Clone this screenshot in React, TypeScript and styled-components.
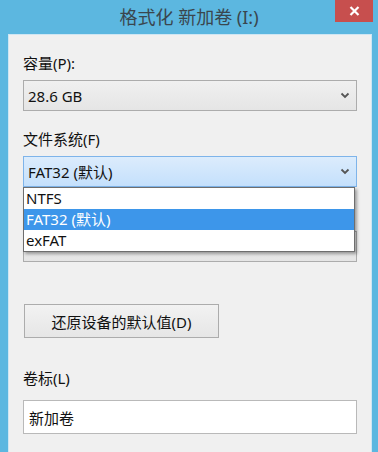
import styled, { createGlobalStyle } from "styled-components";

const GlobalStyle = createGlobalStyle`
  html, body {
    margin: 0;
    padding: 0;
  }
  body {
    font-family: "Noto Sans", "Noto Sans CJK SC", sans-serif;
  }
`;

const Window = styled.div`
  width: 378px;
  height: 452px;
  background: #5cb7e0;
  display: flex;
  flex-direction: column;
  overflow: hidden;
`;

const TitleBar = styled.div`
  height: 34px;
  flex: none;
  display: grid;
  grid-template-columns: 1fr auto 1fr;
  align-items: start;
`;

const Title = styled.div`
  grid-column: 2;
  font-size: 18px;
  line-height: 34px;
  color: #3a464e;
  white-space: nowrap;
`;

const CloseButton = styled.div`
  grid-column: 3;
  justify-self: end;
  margin-right: 5px;
  width: 38px;
  height: 22px;
  background: #c74f4e;
  display: flex;
  align-items: center;
  justify-content: center;
`;

const Panel = styled.div`
  flex: 1;
  margin: 0 6px 0 8px;
  background: #f0f0f0;
  border: 1px solid #cfe6f3;
  border-bottom: none;
  padding: 18px 14px 0 14px;
  display: flex;
  flex-direction: column;
`;

const Label = styled.div<{ $top?: number; $gap?: number }>`
  font-size: 15px;
  line-height: 20px;
  color: #111;
  margin-top: ${(p) => p.$top ?? 0}px;
  margin-bottom: ${(p) => p.$gap ?? 7}px;
`;

const Field = styled.div`
  position: relative;
`;

const Select = styled.div<{ $focused?: boolean; $top?: number }>`
  height: 31px;
  box-sizing: border-box;
  margin-top: ${(p) => p.$top ?? 0}px;
  border: 1px solid ${(p) => (p.$focused ? "#7eb4ea" : "#acacac")};
  background: ${(p) =>
    p.$focused
      ? "linear-gradient(#dcecfc, #c4e0fc)"
      : "linear-gradient(#f0f0f0, #e5e5e5)"};
  display: flex;
  align-items: center;
  justify-content: space-between;
  padding: 0 6px 0 4px;
  font-size: 15px;
  color: #111;
`;

const DropList = styled.div`
  position: absolute;
  top: 31px;
  left: 0;
  right: 2px;
  z-index: 2;
  background: #fff;
  border: 1px solid #6e6e6e;
  box-shadow: 2px 2px 3px rgba(0, 0, 0, 0.35);
`;

const Option = styled.div<{ $selected?: boolean }>`
  height: 21px;
  line-height: 21px;
  padding-left: 2px;
  font-size: 15px;
  color: ${(p) => (p.$selected ? "#fff" : "#111")};
  background: ${(p) => (p.$selected ? "#3d96ea" : "transparent")};
`;

const Button = styled.div`
  width: 195px;
  height: 34px;
  box-sizing: border-box;
  margin-top: 42px;
  margin-left: 1px;
  border: 1px solid #acacac;
  background: linear-gradient(#f2f2f2, #e6e6e6);
  display: flex;
  align-items: center;
  justify-content: center;
  font-size: 15px;
  color: #111;
`;

const TextInput = styled.div`
  height: 34px;
  box-sizing: border-box;
  border: 1px solid #b9b9b9;
  background: #fff;
  display: flex;
  align-items: center;
  padding-left: 5px;
  font-size: 15px;
  color: #111;
`;

const Chevron = () => (
  <svg width="10" height="7" viewBox="0 0 10 7">
    <polyline points="1.5,1.5 5,5 8.5,1.5" fill="none" stroke="#555" strokeWidth="1.8" />
  </svg>
);

const fsOptions = ["NTFS", "FAT32 (默认)", "exFAT"];

export default function App() {
  return (
    <>
      <GlobalStyle />
      <Window>
        <TitleBar>
          <Title>格式化 新加卷 (I:)</Title>
          <CloseButton>
            <svg width="11" height="10" viewBox="0 0 11 10">
              <path d="M1.5 1 L9.5 9 M9.5 1 L1.5 9" stroke="#fff" strokeWidth="2.2" />
            </svg>
          </CloseButton>
        </TitleBar>
        <Panel>
          <Label>容量(P):</Label>
          <Select>
            <span>28.6 GB</span>
            <Chevron />
          </Select>

          <Label $top={18}>文件系统(F)</Label>
          <Field>
            <Select $focused>
              <span>FAT32 (默认)</span>
              <Chevron />
            </Select>
            <DropList>
              {fsOptions.map((o) => (
                <Option key={o} $selected={o.startsWith("FAT32")}>
                  {o}
                </Option>
              ))}
            </DropList>
          </Field>

          {/* allocation unit select, hidden under the open list */}
          <Select $top={44} />

          <Button>还原设备的默认值(D)</Button>

          <Label $top={30} $gap={12}>卷标(L)</Label>
          <TextInput>新加卷</TextInput>
        </Panel>
      </Window>
    </>
  );
}
